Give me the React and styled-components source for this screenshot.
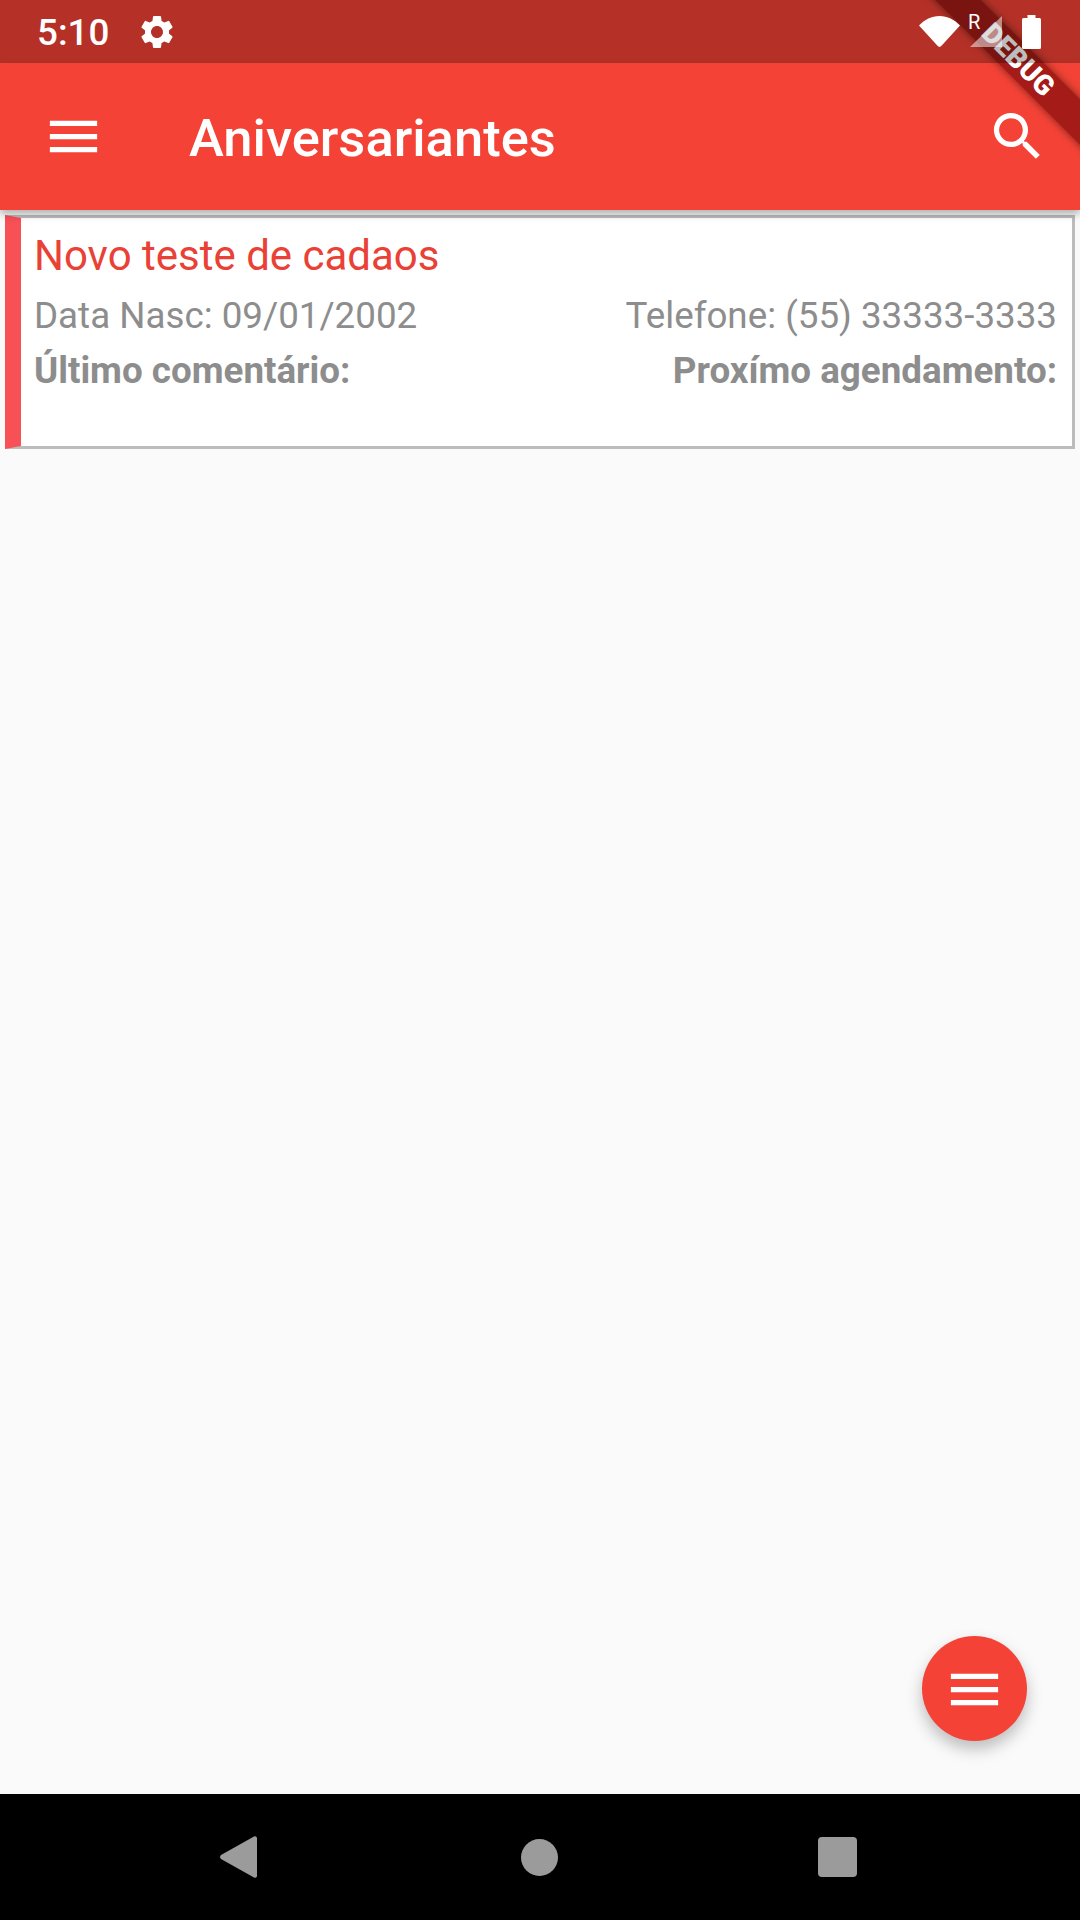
import React from "react";
import styled, { createGlobalStyle } from "styled-components";
import { MdMenu, MdSearch, MdSettings } from "react-icons/md";

const GlobalStyle = createGlobalStyle`
  html, body {
    margin: 0;
    padding: 0;
    background: #fafafa;
    font-family: Roboto, "Liberation Sans", sans-serif;
  }
`;

const Page = styled.div`
  position: relative;
  width: 1080px;
  height: 1920px;
  display: flex;
  flex-direction: column;
  overflow: hidden;
  background: linear-gradient(#f44336 63px, #fafafa 63px);
`;

// the system bar is a dark scrim lying over the app and its debug ribbon
const StatusBar = styled.div`
  position: relative;
  z-index: 3;
  height: 63px;
  flex: none;
  display: flex;
  align-items: center;
  padding: 0 39px 0 37px;
  background: rgba(0, 0, 0, 0.26);
  color: #fff;
`;

const Time = styled.span`
  padding-top: 2px;
  font-size: 36.75px;
  font-weight: 500;
  line-height: 61px;
`;

const Gear = styled(MdSettings)`
  font-size: 40px;
  margin-left: 28px;
`;

const StatusIcons = styled.div`
  margin-left: auto;
  display: flex;
  align-items: center;
`;

const SignalBox = styled.div`
  position: relative;
  margin-left: 10px;
  height: 31px;
`;

const RoamingMark = styled.span`
  position: absolute;
  left: -2px;
  top: -5px;
  font-size: 20px;
  line-height: 22px;
`;

const AppBar = styled.header`
  position: relative;
  z-index: 1;
  height: 147px;
  flex: none;
  display: flex;
  align-items: center;
  padding: 0 31px 0 42px;
  background: #f44336;
  color: #fff;
  box-shadow: 0 4px 8px rgba(0, 0, 0, 0.3);
`;

const Title = styled.h1`
  margin: 2px 0 0 84px;
  font-size: 52.5px;
  font-weight: 500;
`;

const SearchIcon = styled(MdSearch)`
  margin-left: auto;
  font-size: 63px;
`;

const Content = styled.main`
  flex: 1;
  padding: 5px 5px 0;
`;

const Card = styled.article`
  box-sizing: border-box;
  height: 234px;
  padding: 10px 15px 0 13px;
  background: #fff;
  border: 3px solid #bcbcbc;
  border-left: 16px solid #f75056;
`;

const CardTitle = styled.div`
  color: #ea4136;
  font-size: 42px;
  line-height: 56px;
`;

const Row = styled.div`
  display: flex;
  justify-content: space-between;
  margin-top: ${(props) => props.$top}px;
  color: #8d8d8d;
  font-size: 36.75px;
  font-weight: ${(props) => (props.$bold ? 700 : 400)};
  line-height: 45px;
`;

const Fab = styled.button`
  position: absolute;
  left: 922px;
  top: 1636px;
  width: 105px;
  height: 105px;
  padding: 1px 0 0;
  border: 0;
  border-radius: 50%;
  display: flex;
  align-items: center;
  justify-content: center;
  background: #f44336;
  color: #fff;
  font-size: 63px;
  box-shadow: 0 8px 16px rgba(0, 0, 0, 0.25);
`;

const NavBar = styled.nav`
  height: 126px;
  flex: none;
  display: flex;
  align-items: center;
  background: #000;
`;

const NavSlot = styled.div`
  flex: 1;
  display: flex;
  justify-content: ${(props) => props.$justify};
  padding: ${(props) => props.$pad};
`;

const HomeDot = styled.div`
  width: 37px;
  height: 37px;
  margin-left: 2px;
  border-radius: 50%;
  background: #9b9b9b;
`;

const RecentSquare = styled.div`
  width: 39px;
  height: 40px;
  border-radius: 4px;
  background: #9b9b9b;
`;

const Ribbon = styled.div`
  position: absolute;
  z-index: 2;
  top: 44px;
  right: -58px;
  width: 240px;
  height: 32px;
  display: flex;
  align-items: center;
  justify-content: center;
  transform: rotate(45deg);
  background: rgba(150, 20, 18, 0.85);
  box-shadow: 0 0 9px rgba(0, 0, 0, 0.5);
  color: #fff;
  font-size: 28px;
  font-weight: 900;
  line-height: 32px;
`;

const WifiIcon = () => (
  <svg width="41" height="31" viewBox="0 0 41 31">
    <path d="M0 9.500C5.500 3.600 12.600 0 20.500 0S35.500 3.600 41 9.500L22.500 29.800a2.700 2.700 0 0 1-4 0Z" fill="#fff" />
  </svg>
);

const SignalIcon = () => (
  <svg width="32" height="31" viewBox="0 0 32 31">
    <path d="M32 0V31H0Z" fill="#fff" fillOpacity="0.5" />
  </svg>
);

const BatteryIcon = () => (
  <svg width="19" height="34" viewBox="0 0 19 34" style={{ marginLeft: 20 }}>
    <path d="M5.500 0h8v3H17.500a1.500 1.500 0 0 1 1.500 1.500V32.500a1.500 1.500 0 0 1-1.500 1.500H1.500A1.500 1.500 0 0 1 0 32.500V4.500A1.500 1.500 0 0 1 1.500 3H5.500Z" fill="#fff" />
  </svg>
);

const BackIcon = () => (
  <svg width="37" height="42" viewBox="0 0 37 42">
    <path d="M37 2V40a2 2 0 0 1-3 1.500L1 23a2.600 2.600 0 0 1 0-4L34 .5a2 2 0 0 1 3 1.500Z" fill="#9b9b9b" />
  </svg>
);

const App = () => {
  return (
    <Page>
      <GlobalStyle />
      <StatusBar>
        <Time>5:10</Time>
        <Gear />
        <StatusIcons>
          <WifiIcon />
          <SignalBox>
            <SignalIcon />
            <RoamingMark>R</RoamingMark>
          </SignalBox>
          <BatteryIcon />
        </StatusIcons>
      </StatusBar>
      <AppBar>
        <MdMenu size={63} />
        <Title>Aniversariantes</Title>
        <SearchIcon />
      </AppBar>
      <Content>
        <Card>
          <CardTitle>Novo teste de cadaos</CardTitle>
          <Row $top={9}>
            <span>Data Nasc: 09/01/2002</span>
            <span>Telefone: (55) 33333-3333</span>
          </Row>
          <Row $top={10} $bold>
            <span>Último comentário:</span>
            <span>Proxímo agendamento:</span>
          </Row>
        </Card>
      </Content>
      <Fab aria-label="Menu">
        <MdMenu />
      </Fab>
      <NavBar>
        <NavSlot $justify="flex-start" $pad="0 0 0 220px">
          <BackIcon />
        </NavSlot>
        <HomeDot />
        <NavSlot $justify="flex-end" $pad="0 223px 0 0">
          <RecentSquare />
        </NavSlot>
      </NavBar>
      <Ribbon>DEBUG</Ribbon>
    </Page>
  );
};

export default App;
